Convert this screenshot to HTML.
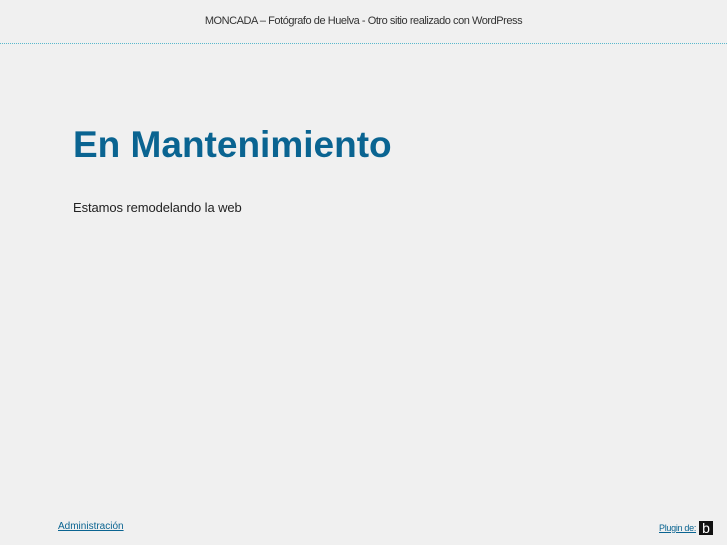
<!DOCTYPE html>
<html><head><meta charset="utf-8"><style>
body{margin:0;width:727px;height:545px;background:#f0f0f0;font-family:"Liberation Sans",sans-serif;position:relative;overflow:hidden}
.top{position:absolute;top:15px;left:0;width:727px;text-align:center;font-size:11px;color:#333;letter-spacing:-0.45px}
.line{position:absolute;top:43px;left:0;width:727px;height:0;border-top:1px dotted #5ab8cc}
h1{position:absolute;left:73px;top:124px;margin:0;font-size:37px;color:#0a6491;font-weight:bold;letter-spacing:0}
p{position:absolute;left:73px;top:200px;margin:0;font-size:13px;color:#222;letter-spacing:-0.1px}
.adm{position:absolute;left:58px;top:521px;font-size:10px;color:#0a6491;text-decoration:underline}
.plg{position:absolute;left:659px;top:523px;font-size:9px;color:#0a6491;text-decoration:underline;letter-spacing:-0.3px}
.b{position:absolute;left:699px;top:521px;width:14px;height:14px;background:#111;color:#fff;font-size:14px;line-height:14px;text-align:center;font-weight:normal}
</style></head><body>
<div class="top">MONCADA – Fotógrafo de Huelva - Otro sitio realizado con WordPress</div>
<div class="line"></div>
<h1>En Mantenimiento</h1>
<p>Estamos remodelando la web</p>
<div class="adm">Administración</div>
<div class="plg">Plugin de:</div>
<div class="b">b</div>
</body></html>
